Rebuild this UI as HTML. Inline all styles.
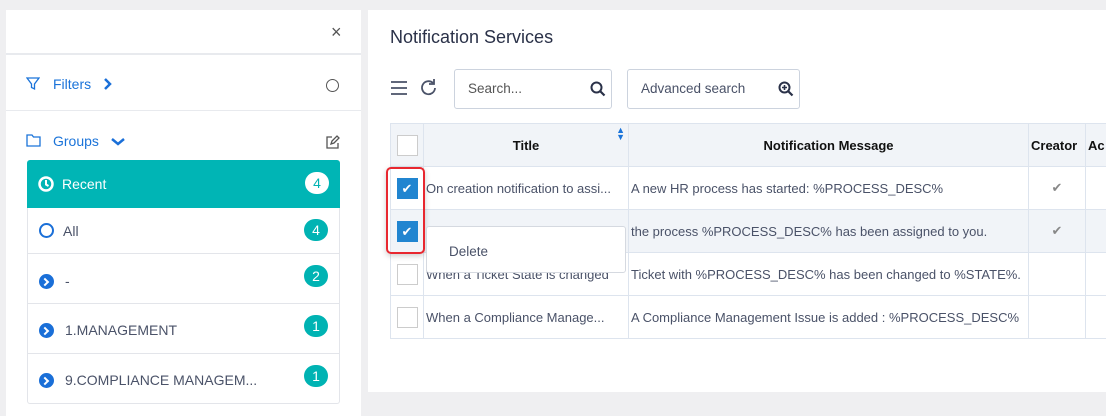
<!DOCTYPE html><html><head><style>
*{box-sizing:border-box;margin:0;padding:0}
body{width:1106px;height:416px;background:#efeff1;font-family:"Liberation Sans",sans-serif;position:relative;overflow:hidden;color:#333}
.abs{position:absolute}
.lp{left:6px;top:10px;width:355px;height:406px;background:#fff}
.rp{left:368px;top:10px;width:738px;height:382px;background:#fff}
.blue{color:#1a73d9}
.item{position:absolute;left:27px;width:313px;border:1px solid #e3e5ea;border-top:none;font-size:14px;color:#4a5268}
.badge{position:absolute;right:11px;width:24px;height:22px;border-radius:11px;background:#00b3b3;color:#fff;font-size:14px;text-align:center;line-height:22px}
.ci{position:absolute;left:11px;width:15px;height:15px;border-radius:50%;background:#1a6fd8}
.ci::after{content:"";position:absolute;left:3px;top:5px;width:4px;height:4px;border-right:2px solid #fff;border-top:2px solid #fff;transform:rotate(45deg)}
table{border-collapse:collapse;position:absolute;left:390px;top:123px;font-size:13px;table-layout:fixed;width:760px}
td,th{border:1px solid #dde4ee;height:43px;white-space:nowrap;overflow:hidden;padding:0 2px;color:#4a5268;font-weight:normal}
th{background:#f1f4f8;color:#111;font-weight:bold}
.cb{width:21px;height:21px;border:1px solid #ccc;background:#fff;margin:0 auto}
.cbc{width:21px;height:21px;background:#2185d0;margin:0 auto;color:#fff;font-size:13px;text-align:center;line-height:21px}
</style></head><body>
<div class="abs lp"></div>
<div class="abs" style="left:6px;top:53px;width:355px;height:2px;background:#e8eaee"></div>
<div class="abs" style="left:6px;top:110px;width:355px;height:1px;background:#e8eaee"></div>
<div class="abs" style="left:331px;top:22px;font-size:18px;color:#555">×</div>
<svg class="abs" style="left:26px;top:77px" width="14" height="14" viewBox="0 0 14 14"><path d="M1 1h12L8.5 7v5l-3-1.5V7z" fill="none" stroke="#1a73d9" stroke-width="1.3"/></svg>
<div class="abs blue" style="left:53px;top:76px;font-size:14px">Filters</div>
<svg class="abs" style="left:103px;top:78px" width="10" height="12"><path d="M2 1l5 5-5 5" fill="none" stroke="#1a6fd8" stroke-width="2.5"/></svg>
<div class="abs" style="left:326px;top:79px;width:13px;height:13px;border:1.5px solid #555;border-radius:50%"></div>
<svg class="abs" style="left:26px;top:134px" width="15" height="13"><path d="M1 1h5l1.5 2H14v9H1z" fill="none" stroke="#1a73d9" stroke-width="1.3"/></svg>
<div class="abs blue" style="left:53px;top:133px;font-size:14px">Groups</div>
<svg class="abs" style="left:111px;top:137px" width="14" height="10"><path d="M1 2l6 5 6-5" fill="none" stroke="#1a6fd8" stroke-width="2.5"/></svg>
<svg class="abs" style="left:325px;top:135px" width="15" height="15"><path d="M7 2H2v11h11V8M6 9l1-3 5-5 2 2-5 5z" fill="none" stroke="#555" stroke-width="1.3"/></svg>
<div class="item" style="top:160px;height:48px;background:#00b5b5;border:none;border-radius:3px 3px 0 0;color:#fff">
<svg class="abs" style="left:11px;top:16px" width="16" height="16"><circle cx="8" cy="8" r="6.5" fill="none" stroke="#fff" stroke-width="2.5"/><path d="M8 4v4.5l2.5 1.5" fill="none" stroke="#fff" stroke-width="2"/></svg>
<div class="abs" style="left:35px;top:16px">Recent</div>
<div class="badge" style="top:12px;background:#fff;color:#00b3b3">4</div></div>
<div class="item" style="top:208px;height:46px"><div class="abs" style="left:11px;top:15px;width:15px;height:15px;border:2.5px solid #1a6fd8;border-radius:50%"></div><div class="abs" style="left:35px;top:15px">All</div><div class="badge" style="top:11px">4</div></div>
<div class="item" style="top:254px;height:50px"><div class="ci" style="top:20px"></div><div class="abs" style="left:37px;top:19px">-</div><div class="badge" style="top:11px">2</div></div>
<div class="item" style="top:304px;height:50px"><div class="ci" style="top:19px"></div><div class="abs" style="left:37px;top:18px">1.MANAGEMENT</div><div class="badge" style="top:11px">1</div></div>
<div class="item" style="top:354px;height:50px;border-radius:0 0 3px 3px"><div class="ci" style="top:19px"></div><div class="abs" style="left:37px;top:18px">9.COMPLIANCE MANAGEM...</div><div class="badge" style="top:11px">1</div></div>

<div class="abs rp"></div>
<div class="abs" style="left:390px;top:27px;font-size:18px;color:#2a3148">Notification Services</div>
<svg class="abs" style="left:390px;top:80px" width="18" height="16"><path d="M1 2h16M1 8h16M1 14h16" stroke="#4a5268" stroke-width="1.8"/></svg>
<svg class="abs" style="left:419px;top:78px" width="20" height="20"><path d="M16 10a6.5 6.5 0 1 1-2-5" fill="none" stroke="#4a5268" stroke-width="1.8"/><path d="M15 1v5h-5" fill="none" stroke="#4a5268" stroke-width="1.8"/></svg>
<div class="abs" style="left:454px;top:69px;width:158px;height:40px;border:1px solid #ccd3de;border-radius:3px;font-size:13.5px;color:#555;padding:11px 13px">Search...</div>
<svg class="abs" style="left:590px;top:81px" width="16" height="16"><circle cx="6.5" cy="6.5" r="5" fill="none" stroke="#2a3148" stroke-width="2"/><path d="M10 10l4.5 4.5" stroke="#2a3148" stroke-width="2.2"/></svg>
<div class="abs" style="left:627px;top:69px;width:173px;height:40px;border:1px solid #ccd3de;border-radius:3px;font-size:13.5px;color:#4a5268;padding:11px 13px">Advanced search</div>
<svg class="abs" style="left:778px;top:81px" width="16" height="16"><circle cx="6.5" cy="6.5" r="5" fill="none" stroke="#2a3148" stroke-width="2"/><path d="M10 10l4.5 4.5" stroke="#2a3148" stroke-width="2.2"/><path d="M6.5 4v5M4 6.5h5" stroke="#2a3148" stroke-width="1.6"/></svg>
<table>
<colgroup><col style="width:33px"><col style="width:205px"><col style="width:400px"><col style="width:57px"><col style="width:65px"></colgroup>
<tr><th><div class="cb"></div></th><th style="position:relative">Title<span style="position:absolute;right:3px;top:3px;color:#1a73d9;font-size:9px;line-height:7px">▲<br>▼</span></th><th>Notification Message</th><th style="text-align:left">Creator</th><th style="text-align:left">Ac</th></tr>
<tr><td><div class="cbc">✔</div></td><td>On creation notification to assi...</td><td>A new HR process has started: %PROCESS_DESC%</td><td style="text-align:center;color:#888">✔</td><td></td></tr>
<tr style="background:#f1f4f8"><td><div class="cbc">✔</div></td><td></td><td>the process %PROCESS_DESC% has been assigned to you.</td><td style="text-align:center;color:#888">✔</td><td></td></tr>
<tr><td><div class="cb"></div></td><td>When a Ticket State is changed</td><td>Ticket with %PROCESS_DESC% has been changed to %STATE%.</td><td></td><td></td></tr>
<tr><td><div class="cb"></div></td><td>When a Compliance Manage...</td><td>A Compliance Management Issue is added : %PROCESS_DESC%</td><td></td><td></td></tr>
</table>
<div class="abs" style="left:386px;top:167px;width:39px;height:87px;border:2px solid #e8272f;border-radius:5px;box-shadow:0 2px 6px rgba(0,0,0,.2)"></div>
<div class="abs" style="left:426px;top:226px;width:200px;height:47px;background:#fff;border:1px solid #d5d9e0;border-radius:3px;font-size:13.5px;color:#4a5268;padding:17px 22px">Delete</div>
</body></html>
